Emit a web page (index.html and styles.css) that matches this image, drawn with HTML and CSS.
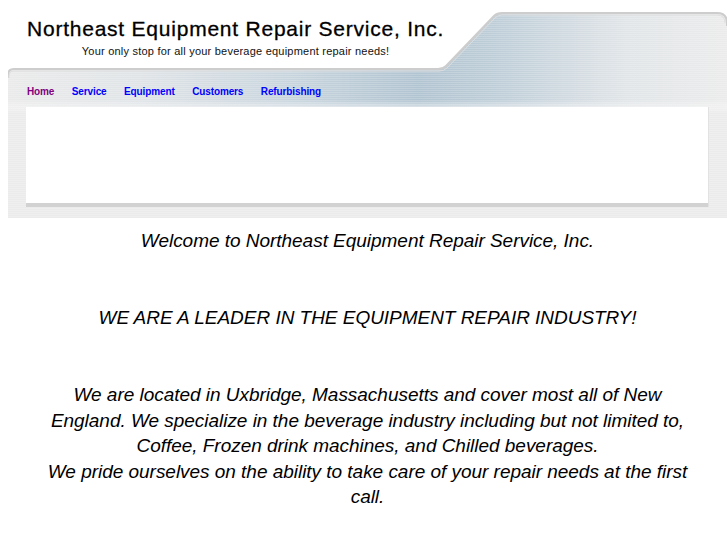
FILE: index.html
```html
<!DOCTYPE html>
<html lang="en">
<head>
<meta charset="utf-8">
<title>Northeast Equipment Repair Service, Inc.</title>
<link rel="stylesheet" href="styles.css">
</head>
<body>
<div class="wrap">
  <header class="header">
    <svg class="header-bg" width="719" height="218" viewBox="0 0 719 218" aria-hidden="true">
      <defs>
        <linearGradient id="band" x1="0" y1="0" x2="719" y2="0" gradientUnits="userSpaceOnUse">
          <stop offset="0" stop-color="#eaeaea"/>
          <stop offset="0.18" stop-color="#e0e4e7"/>
          <stop offset="0.4" stop-color="#c7d4dd"/>
          <stop offset="0.57" stop-color="#b1c4d1"/>
          <stop offset="0.69" stop-color="#c0cfd9"/>
          <stop offset="0.86" stop-color="#e1e5e8"/>
          <stop offset="1" stop-color="#ebebeb"/>
        </linearGradient>
        <linearGradient id="fade" x1="0" y1="0" x2="0" y2="218" gradientUnits="userSpaceOnUse">
          <stop offset="0" stop-color="#ffffff" stop-opacity="0"/>
          <stop offset="0.46" stop-color="#ffffff" stop-opacity="0"/>
          <stop offset="0.52" stop-color="#ebebeb" stop-opacity="1"/>
          <stop offset="1" stop-color="#ebebeb" stop-opacity="1"/>
        </linearGradient>
        <pattern id="lines" width="4" height="2" patternUnits="userSpaceOnUse">
          <rect width="4" height="1" fill="#ffffff" fill-opacity="0.18"/>
        </pattern>
        <clipPath id="shape">
          <path d="M0 218 V75 Q0 69 6 69 H430 Q435 69 438 66 L486 16 Q489 13 494 13 H709 Q719 13 719 23 V218 Z"/>
        </clipPath>
      </defs>
      <g clip-path="url(#shape)">
        <rect width="719" height="218" fill="url(#band)"/>
        <rect width="719" height="218" fill="url(#fade)"/>
        <rect width="719" height="218" fill="url(#lines)"/>
      </g>
      <path d="M0 78 V75 Q0 69 6 69 H430 Q435 69 438 66 L486 16 Q489 13 494 13 H709 Q719 13 719 23 V26" fill="none" stroke="#cdcdcd" stroke-width="2"/>
      <path d="M1 78 V76 Q1 71 6 71 H431 Q436 71 439 68 L487 18 Q490 15 494 15 H709 Q717 15 717 23" fill="none" stroke="#dedede" stroke-width="1"/>
    </svg>
    <div class="brand">
      <h1 class="title">Northeast Equipment Repair Service, Inc.</h1>
      <p class="tagline">Your only stop for all your beverage equipment repair needs!</p>
    </div>
    <nav class="nav">
      <a class="nav-link current" href="#">Home</a>
      <a class="nav-link" href="#">Service</a>
      <a class="nav-link" href="#">Equipment</a>
      <a class="nav-link" href="#">Customers</a>
      <a class="nav-link" href="#">Refurbishing</a>
    </nav>
    <div class="panel"></div>
  </header>
  <main class="content">
    <p class="line">Welcome to Northeast Equipment Repair Service, Inc.</p>
    <p class="line">WE ARE A LEADER IN THE EQUIPMENT REPAIR INDUSTRY!</p>
    <p class="line">We are located in Uxbridge, Massachusetts and cover most all of New England. We specialize in the beverage industry including but not limited to, Coffee, Frozen drink machines, and Chilled beverages.<br>We pride ourselves on the ability to take care of your repair needs at the first call.</p>
  </main>
</div>
</body>
</html>
```
FILE: styles.css
```css
html, body {
  margin: 0;
  padding: 0;
  background: #ffffff;
}

body {
  padding-left: 8px;
  font-family: "Liberation Sans", Arial, Helvetica, sans-serif;
  color: #000;
}

.wrap {
  width: 719px;
}

.header {
  position: relative;
  height: 218px;
  display: flex;
  flex-direction: column;
  align-items: flex-start;
}

.header-bg {
  position: absolute;
  left: 0;
  top: 0;
  z-index: 0;
}

.brand {
  position: relative;
  z-index: 1;
  display: flex;
  flex-direction: column;
  align-items: center;
  margin: 17px 0 0 19px;
}

.title {
  margin: 0;
  font-size: 21px;
  line-height: 24px;
  font-weight: normal;
  letter-spacing: 0.77px;
  -webkit-text-stroke: 0.3px #000;
  color: #000;
}

.tagline {
  margin: 4px 0 0;
  font-size: 11px;
  line-height: 13px;
  letter-spacing: 0.22px;
  color: #111;
}

.nav {
  position: relative;
  z-index: 1;
  display: flex;
  gap: 17.5px;
  margin: 27px 0 0 19px;
  font-size: 10px;
  line-height: 14px;
  font-weight: bold;
  letter-spacing: -0.12px;
}

.nav-link {
  color: #0000ff;
  text-decoration: none;
}

.nav-link.current {
  color: #800080;
}

.panel {
  position: relative;
  z-index: 1;
  margin: 8px 0 0 18px;
  width: 682px;
  height: 96px;
  background: #ffffff;
  border-bottom: 4px solid #d2d2d2;
  box-shadow: 1px 0 0 #e2e2e2;
}

.content {
  padding-top: 10px;
  text-align: center;
}

.line {
  width: 660px;
  margin: 0 auto 51.5px;
  font-size: 19px;
  line-height: 25.5px;
  font-style: italic;
  letter-spacing: -0.03px;
  color: #000;
}
```
